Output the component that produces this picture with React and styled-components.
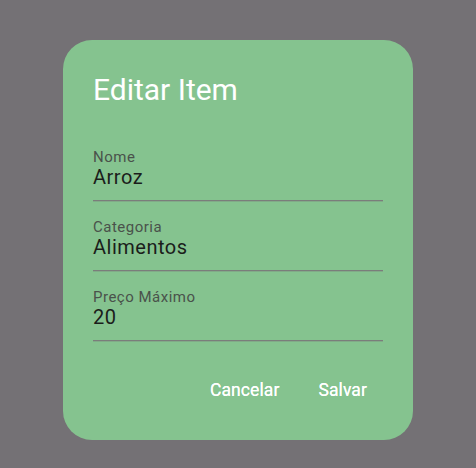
import React from 'react';
import styled, { createGlobalStyle } from 'styled-components';

const GlobalStyle = createGlobalStyle`
  html, body {
    margin: 0;
    padding: 0;
    background: #747175;
  }
  body {
    font-family: Roboto, "Liberation Sans", sans-serif;
  }
`;

const Backdrop = styled.div`
  min-height: 468px;
  display: flex;
  justify-content: center;
  align-items: flex-start;
  padding-top: 40px;
  box-sizing: border-box;
`;

const Dialog = styled.div`
  width: 350px;
  box-sizing: border-box;
  padding: 32px 30px 30px;
  background: #85c38f;
  border-radius: 29px;
  display: flex;
  flex-direction: column;
`;

const Title = styled.h2`
  margin: 0;
  font-size: 30px;
  line-height: 36px;
  font-weight: 400;
  color: #ffffff;
`;

const Form = styled.div`
  margin-top: 41px;
  display: flex;
  flex-direction: column;
  gap: 18px;
`;

const Field = styled.label`
  display: flex;
  flex-direction: column;
  padding-bottom: 12px;
  border-bottom: 1px solid #7b7d7b;
  box-shadow: 0 1px 0 rgba(123, 125, 123, 0.35);
`;

const Label = styled.span`
  font-size: 15px;
  line-height: 17px;
  letter-spacing: 0.5px;
  color: #4a524b;
`;

const Value = styled.span`
  font-size: 20px;
  line-height: 22px;
  letter-spacing: 0.5px;
  color: #1b1d1b;
`;

const Actions = styled.div`
  margin-top: 29px;
  display: flex;
  justify-content: flex-end;
  gap: 7px;
`;

const TextButton = styled.button`
  height: 40px;
  padding: 0 16px;
  border: none;
  background: transparent;
  font-family: Roboto, "Liberation Sans", sans-serif;
  font-size: 17.5px;
  font-weight: 400;
  letter-spacing: 0.1px;
  line-height: 40px;
  color: #ffffff;
  text-shadow: 0 0 0.3px #ffffff;
  border-radius: 20px;
  cursor: pointer;
`;

const fields = [
  { label: 'Nome', value: 'Arroz' },
  { label: 'Categoria', value: 'Alimentos' },
  { label: 'Preço Máximo', value: '20' },
];

const App = () => {
  return (
    <>
      <GlobalStyle />
      <Backdrop>
        <Dialog>
          <Title>Editar Item</Title>
          <Form>
            {fields.map((f) => (
              <Field key={f.label}>
                <Label>{f.label}</Label>
                <Value>{f.value}</Value>
              </Field>
            ))}
          </Form>
          <Actions>
            <TextButton>Cancelar</TextButton>
            <TextButton>Salvar</TextButton>
          </Actions>
        </Dialog>
      </Backdrop>
    </>
  );
};

export default App;
